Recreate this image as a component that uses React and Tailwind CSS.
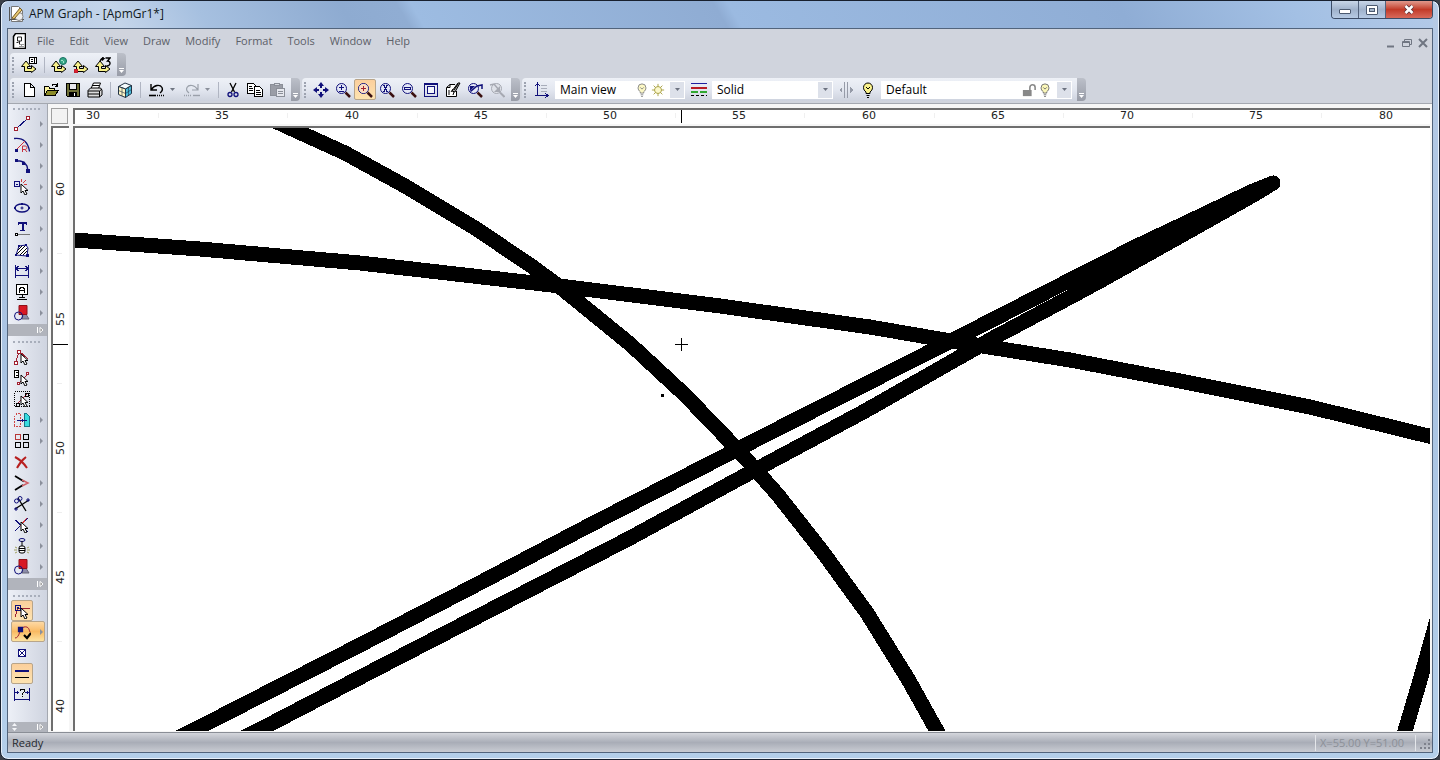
import React from 'react';

const NAVY = '#10107a';
const RED = '#a02030';

function Icon({ children, size = 16, className = '' }) {
  return (
    <svg
      width={size}
      height={size}
      viewBox="0 0 16 16"
      fill="none"
      stroke="#000"
      shapeRendering="crispEdges"
      className={`shrink-0 ${className}`}
      aria-hidden="true"
    >
      {children}
    </svg>
  );
}

/* pair of yellow arrows shared by the coordinate system icons */
const AXES = (
  <path d="M3.500 14.500V9.500H.5L5 4 9.500 9.500H6.500v2h4V8.500L15 12l-4.500 3.500V14.500z" fill="#f7f08a" shapeRendering="auto" />
);

const LENS = (
  <>
    <circle cx="6.500" cy="6.500" r="5" fill="#e4e8f6" stroke={NAVY} shapeRendering="auto" />
    <path d="M10.500 10.500L15 15" stroke="#3a1010" strokeWidth="2.500" shapeRendering="auto" />
  </>
);

const BULB = (
  <g shapeRendering="auto">
    <path d="M6 11.500V10C4.500 8.800 3.500 7.500 3.500 5.500a4.500 4.500 0 0 1 9 0c0 2-1 3.300-2.500 4.500v1.500z" fill="#faf28c" />
    <path d="M6.500 13.500h3M7 15.500h2M6 5l2 2 2-2" />
  </g>
);

const CURSOR = <path d="M7 5v9l2-2 2 4 2-1-2-3.500h3z" fill="#fff" strokeWidth="1" shapeRendering="auto" />;

const SHAPES = (
  <g shapeRendering="auto">
    <path d="M10 6l5 8H8z" fill="#8b8ba8" stroke="#667" />
    <path d="M5 .5h8v9H5z" fill="#d81824" stroke="#901018" />
    <circle cx="4.500" cy="11" r="4" stroke={NAVY} />
  </g>
);

const ICONS = {
  axesForm: <>{AXES}<path d="M8.500.5h7v6h-7z" fill="#fff" /><path d="M10 2.500h2M10 4.500h2M13.500 1v5" /></>,
  axesGlobe: <>{AXES}<circle cx="12" cy="4" r="3.500" fill="#38a888" stroke="#157060" shapeRendering="auto" /><path d="M10 3l2 1 1 2" stroke="#9fe0c8" /></>,
  axesOrigin: <>{AXES}<path d="M1 12.500h3v3H1z" fill="#e02030" stroke="#c02030" /></>,
  axesRotate: <>{AXES}<path d="M5 4c1-2 2-3 4-3M7 .5l2 1-2 2M10.500 1h4.500l-2.500 3c3.500 0 3.500 5-1 5" strokeWidth="1.400" shapeRendering="auto" /></>,
  fresh: <path d="M3.500 1.500h6l4 4v9h-10zM9.500 1.500v4h4" fill="#fff" />,
  open: <><path d="M1.500 13.500v-9h4l1 1.500h5v3" fill="#faf3a0" /><path d="M1.500 13.500l3-5h11l-3.500 5z" fill="#8b8b28" /><path d="M9 3.500c2-2 4-2 5 0M14.500 1v3h-3" /></>,
  save: <><path d="M1.500 1.500h13v13h-12l-1-1z" fill="#6e7038" /><path d="M4.500 1.500h7v6h-7z" fill="#e8e8ef" /><path d="M4.500 10h7v4.500h-7z" fill="#000" /><path d="M9.500 11v3" stroke="#fff" /></>,
  print: <g shapeRendering="auto"><path d="M4 6.500L6.500 1h7L11.500 6.500" fill="#fff" /><path d="M1 8.500L3.500 6h10l1.500 2v5l-2.500 2H1z" fill="#ddd" /><path d="M1 9h11.500l2.500-2M1 12h11M12.500 9v6M5 3.500h7" /></g>,
  cube: <g shapeRendering="auto" stroke="#234"><path d="M1.500 4.500L8 1l6.500 2.500L8.500 7z" fill="#f4fafc" /><path d="M1.500 4.500l7 2.500v8.500l-7-3z" fill="#fff6c4" /><path d="M8.500 7l6-3.500v8l-6 4z" fill="#48bad8" /><path d="M1.500 8.500l7 3 6-4M5 5.800v8M11.500 5.200v8" strokeWidth=".6" /></g>,
  undo: <g shapeRendering="auto"><path d="M2 2v6h6M2.500 7.500C5 3 11 2 13 5.500c1 2 0 4-2 5.500" strokeWidth="1.400" /><path d="M0 13.500h7" strokeWidth="1.600" /><path d="M8 13.500h8" strokeDasharray="1 1" strokeWidth="1.600" /></g>,
  redo: <g shapeRendering="auto" stroke="#9aa0aa"><path d="M14 2v6H8M13.500 7.500C11 3 5 2 3 5.500c-1 2 0 4 2 5.500" strokeWidth="1.200" /><path d="M9 13.500h7" strokeWidth="1.400" /><path d="M0 13.500h8" strokeDasharray="1 1" strokeWidth="1.400" /></g>,
  cut: <g shapeRendering="auto"><path d="M5 1l4.500 9M11 1L6.500 10" strokeWidth="1.300" /><circle cx="5" cy="12.500" r="2" stroke={NAVY} strokeWidth="1.300" /><circle cx="11" cy="12.500" r="2" stroke={NAVY} strokeWidth="1.300" /></g>,
  copy: <><path d="M.5 1.500h6l2 2v8h-8zM2 4.500h3M2 6.500h4M2 8.500h4" fill="#fff" /><path d="M7.500 4.500h5l3 3v7h-8zM9 8.500h4M9 10.500h5M9 12.500h5" fill="#fff" /></>,
  paste: <g stroke="#8b8f98"><path d="M1.500 2.500h12v11h-12z" fill="#9a9da6" /><path d="M5 1.500h5v2H5z" fill="#d5d8df" /><path d="M7.500 6.500h8v8h-8zM9 9.500h5M9 11.500h5" fill="#e6e8ee" /></g>,
  pan: <g fill={NAVY} stroke="none" shapeRendering="auto"><path d="M8 0l3 4H9v2H7V4H5zM8 16l3-4H9v-2H7v2H5zM0 8l4-3v2h2v2H4v2zM16 8l-4-3v2h-2v2h2v2z" /></g>,
  zoomBoth: <>{LENS}<path d="M4 5.500h5M6.500 3v5M4 9.500h5" stroke={NAVY} /></>,
  zoomIn: <>{LENS}<circle cx="6.500" cy="6.500" r="4.500" fill="#fbdcc0" stroke="none" shapeRendering="auto" /><path d="M4 6.500h5M6.500 4v5" stroke={RED} /></>,
  zoomX: <>{LENS}<path d="M4.500 3l4 7M8.500 3l-4 7M4 3.500h2M7 3.500h2M4 9.500h2M7 9.500h2" stroke={NAVY} /></>,
  zoomOut: <>{LENS}<path d="M3.500 5.500h6v2h-6z" stroke={NAVY} /></>,
  fit: <><path d="M1.500 1.500h13v13h-13z" stroke={NAVY} strokeWidth="1" /><path d="M4.500 4.500h7v7h-7z" fill="#f3f5fb" stroke={NAVY} /><path d="M1 2h14" stroke={NAVY} /></>,
  redraw: <g shapeRendering="auto"><path d="M10 2.500H5l-3.500 3v9h10V9" fill="#fff" /><path d="M5 2.500v3H2M4 8v5M6 10l2-3M8 13l1-3" /><path d="M7 9L13 1h2l-5 9z" fill="#aaa" /><path d="M9 8l4-6" /></g>,
  zoomPrev: <>{LENS}<path d="M3.500 9.500L10 4l5-1v4" stroke={NAVY} strokeWidth="1.500" shapeRendering="auto" /><path d="M3 4h5l-5 5z" fill={NAVY} stroke="none" shapeRendering="auto" /></>,
  zoomNext: <g stroke="#a6a9b2" shapeRendering="auto"><circle cx="7.500" cy="6.500" r="5" fill="#dfe2e9" /><path d="M11 10.500L15.500 15" strokeWidth="2" /><path d="M1 3l4-1 5 6" strokeWidth="1.500" /><path d="M11 4v6H5z" fill="#a6a9b2" stroke="none" /></g>,
  ucs: <><path d="M4.500 1v12M2 13.500h13M2.500 4l2-3 2 3M12 11l3 2.500-3 2.500" stroke={NAVY} /><path d="M8 3.500h6M8 6.500h6M8 9.500h6" stroke="#a8adba" /></>,
  bulb: BULB,
  sun: <g stroke="#a29a38" shapeRendering="auto"><circle cx="8" cy="8" r="4" fill="#fbf8cc" /><path d="M8 1v3M8 12v3M1 8h3M12 8h3M3 3l2 2M11 11l2 2M13 3l-2 2M5 11l-2 2" /></g>,
  linetypes: <><path d="M0 1.500h16" stroke="#2020a0" /><path d="M0 6h16" stroke="#b81c24" strokeWidth="2" /><path d="M0 10h16" stroke="#30a830" strokeWidth="2" strokeDasharray="7 2" /><path d="M0 13.500h16" strokeDasharray="3 2" /></>,
  split: <g stroke="#969ba8"><path d="M6.500 0v16M9.500 0v16" /><path d="M1 8l3-3v6zM15 8l-3-3v6z" fill="#969ba8" stroke="none" /></g>,
  lock: <g shapeRendering="auto"><path d="M9 8V5a3 3 0 0 1 6 0v3" stroke="#888" strokeWidth="1.800" /><path d="M1 8h10v7H1z" fill="#888" stroke="none" /></g>,
  line: <><path d="M2 13L14 2" stroke={NAVY} /><path d="M.5 11.500h3v3h-3zM12.500.5h3v3h-3z" fill="#fff" stroke={RED} /></>,
  arc: <g shapeRendering="auto"><path d="M0 1.500c8-1 14 3 15.500 13" stroke={NAVY} strokeWidth="1.300" /><path d="M2 13L11 4" stroke="#d03040" /><path d="M1 12h3v3H1z" fill={NAVY} stroke="none" /><path d="M8.500 15V9H11c2.500 0 2.500 3.500 0 3.500H8.500M11 12.500l2 2.500" stroke="#c83040" /></g>,
  spline: <g shapeRendering="auto"><path d="M2 3h4l4 1 3 4 1 5" stroke={NAVY} strokeWidth="1.400" /><path d="M1 1h3v3H1zM8 4h3v3H8zM12 11h4v4h-4z" fill={NAVY} stroke="none" /></g>,
  point: <><path d="M.5 2.500h5v5h-5zM2 5h2" fill="#dfe3f5" stroke={NAVY} /><path d="M7 0v3M9 4l3-3M10 5h3" stroke="#d04040" />{CURSOR}</>,
  ellipse: <g shapeRendering="auto"><ellipse cx="8" cy="8" rx="7" ry="4" stroke={NAVY} strokeWidth="1.300" /><path d="M6.500 8h3M8 6.500v3" stroke={NAVY} /><path d="M0 7h2v2H0zM14 7h2v2h-2zM7 3h2v2H7z" fill={NAVY} stroke="none" /></g>,
  text: <><path d="M4 1.500h9M8.500 1v8" stroke={NAVY} strokeWidth="2" /><path d="M4.500 1v3M12.500 1v3M6 9.500h5" stroke={NAVY} /><path d="M3 13.500h13" stroke="#777" /><path d="M1.500 12.500h2v2h-2z" fill="#fff" /></>,
  hatch: <g shapeRendering="auto"><path d="M2 13L5 4l7-1 2 3-1 8z" fill="#fff" stroke={NAVY} /><path d="M3 12l8-8M6 13l7-7M9 13l4-4M4 8l4-4" /><path d="M1 12h2v2H1zM12 12h3v3h-3zM11 2h2v2h-2zM4 3h2v2H4z" fill={NAVY} stroke="none" /></g>,
  dimension: <path d="M1.500 2v13M14.500 2v13M1 12.500h14M2 5.500h12M5 3L2 5.500 5 8M11 3l3 2.500L11 8" stroke={NAVY} strokeWidth="1.300" />,
  annotation: <><path d="M2.500.5h11v10h-11zM8 10.500V14M3 15h10M5 13h6" fill="#fff" /><path d="M5.500 9V5l2-2h1l2 2v4M5.500 6.500h5" /></>,
  shapes: SHAPES,
  editNode: <><path d="M2 13L5 2l9 8" stroke={RED} /><path d="M.5 12.500h3v3h-3zM3.500 1.500h3v3h-3z" fill="#fff" stroke={RED} />{CURSOR}</>,
  editList: <><path d="M.5.5h4v7h-4zM2 2.500h2M2 5h2" fill="#fff" /><path d="M5 13l8-8" stroke={RED} /><path d="M12.500 2.500h2v2h-2zM3.500 12.500h2v2h-2z" fill="#fff" stroke={RED} />{CURSOR}</>,
  selectBox: <><path d="M.5.5h15v15H.5z" strokeDasharray="1 1" /><path d="M3 13L13 3" stroke={RED} /><path d="M2 12h3v3H2zM11 2h3v3h-3z" />{CURSOR}</>,
  mirror: <><path d="M6.500 1.500C3 1 1 2 .5 6v8h6z" stroke="#d04848" strokeDasharray="2 1" /><path d="M10.500 1.500h2l3 3v10h-5z" fill="#38dce0" stroke="#187888" /><path d="M3 8.500h10M8 7v3" stroke={NAVY} /></>,
  array: <><path d="M1.500 1.500h5v5h-5z" stroke="#b83838" /><path d="M9.500 1.500h5v5h-5zM1.500 9.500h5v5h-5zM9.500 9.500h5v5h-5z" /></>,
  erase: <path d="M1 3c4 2 8 5 12 11M12 3C8 6 5 10 3 14" stroke="#b82020" strokeWidth="2" shapeRendering="auto" />,
  corner: <g shapeRendering="auto"><path d="M1 1l9 5.500M1 15l8-5" strokeWidth="1.800" /><path d="M8 5l6 3-6 3" stroke="#d06068" strokeWidth="1.500" /></g>,
  trim: <g shapeRendering="auto"><path d="M1 13L15 4M4 2l8 13" strokeWidth="1.300" /><circle cx="2.500" cy="5" r="2" stroke={NAVY} /><circle cx="6" cy="2.500" r="2" stroke={NAVY} /><path d="M1 12h2v2H1zM13 3h2v2h-2z" stroke={NAVY} /></g>,
  breakLine: <><path d="M1 3l13 12M1 14L14 1" stroke={NAVY} strokeWidth="1.300" /><path d="M6 9l7-8" stroke="#d03838" />{CURSOR}</>,
  explode: <g shapeRendering="auto"><ellipse cx="8" cy="2" rx="3" ry="1.500" stroke={NAVY} /><path d="M8 3v5" /><rect x="5" y="8" width="6" height="7" rx="2" fill="#fff" /><path d="M5 10.500h6M5 12.500h6" /><path d="M1 9l2 1M0 12h3M1 15l2-1M15 9l-2 1M16 12h-3M15 15l-2-1" stroke="#a0a060" /></g>,
  snapEnd: <><path d="M4 5h12M4 5L1 14" stroke={RED} /><path d="M1.500 2.500h5v5h-5zM3 5h2" stroke={NAVY} strokeWidth="1.500" />{CURSOR}</>,
  snapCurve: <g shapeRendering="auto"><path d="M0 14c5 0 4-10 9-11s5 3 6 5" stroke={RED} /><path d="M3.500 3.500h4v4h-4zM3.500 3.500l4 4M7.500 3.500l-4 4" stroke={NAVY} strokeWidth="1.300" /><path d="M9 11l3 3 4-5" strokeWidth="2.200" /></g>,
  snapPoint: <path d="M4.500 4.500h7v7h-7zM5 5l6 6M11 5l-6 6" fill="#fff" stroke={NAVY} />,
  parallel: <><path d="M1 5h14" stroke={NAVY} strokeWidth="2" /><path d="M1 11.500h14" /></>,
  dimQuery: <><path d="M.5 1v13M15.500 1v13M0 12.500h16M1 5.500h4M11 5.500h4M3 4v3M13 4v3" stroke={NAVY} /><path d="M6 4V2h4v3L8 7v1M8 9v1" /></>,
};

const MENU = ['File', 'Edit', 'View', 'Draw', 'Modify', 'Format', 'Tools', 'Window', 'Help'];

const DRAW_TOOLS = ['line', 'arc', 'spline', 'point', 'ellipse', 'text', 'hatch', 'dimension', 'annotation', 'shapes'];
const EDIT_TOOLS = ['editNode', 'editList', 'selectBox', 'mirror', 'array', 'erase', 'corner', 'trim', 'breakLine', 'explode', 'shapes'];
const NO_FLYOUT = ['editNode', 'editList', 'selectBox', 'erase', 'snapEnd', 'snapPoint', 'parallel', 'dimQuery'];
const SNAP_TOOLS = ['snapEnd', 'snapCurve', 'snapPoint', 'parallel', 'dimQuery'];
const SNAP_ACTIVE = ['snapEnd', 'snapCurve', 'parallel'];

const H_MARKS = [
  [30, 93], [35, 222], [40, 352], [45, 481], [50, 610], [55, 739],
  [60, 869], [65, 998], [70, 1127], [75, 1256], [80, 1386],
];
const V_MARKS = [[60, 188], [55, 318], [50, 447], [45, 576], [40, 705]];

function ToolButton({ name, active }) {
  return (
    <button
      type="button"
      aria-label={name}
      className={`flex h-[21px] w-[22px] shrink-0 items-center justify-center ${active ? 'rounded-xs border border-[#b8a58a] bg-linear-to-b from-[#fbcf9c] to-[#fde3b0]' : ''}`}
    >
      <Icon>{ICONS[name]}</Icon>
    </button>
  );
}

function Separator() {
  return (
    <span className="flex w-2 shrink-0 justify-center">
      <span className="h-4 w-px bg-[#b0b5c2]" />
    </span>
  );
}

function DropArrow({ className = '' }) {
  return (
    <svg width="5" height="3" viewBox="0 0 5 3" className={className} aria-hidden="true">
      <path d="M0 0h5L2.500 3z" fill="currentColor" />
    </svg>
  );
}

function Toolbar({ label, children }) {
  return (
    <div role="toolbar" aria-label={label} className="flex h-[23px]">
      <div className="flex items-center rounded-l-sm bg-linear-to-b from-[#eef1f7] via-[#e3e7f0] to-[#cdd2de] pr-[3px]">
        <span className="ml-[2px] mr-1 h-4 w-[2px] border-l-2 border-dotted border-[#9da3b0]" />
        {children}
      </div>
      <button
        type="button"
        aria-label="Toolbar options"
        className="flex w-[9px] flex-col items-center justify-end gap-px rounded-r-sm bg-linear-to-b from-[#bcc0c9] to-[#989ca7] pb-[3px] text-white"
      >
        <span className="h-px w-[5px] bg-white" />
        <DropArrow />
      </button>
    </div>
  );
}

function Split({ name, muted }) {
  return (
    <span className="flex items-center">
      <button type="button" aria-label={name} className="flex w-[26px] justify-center">
        <Icon>{ICONS[name]}</Icon>
      </button>
      <button type="button" aria-label={`${name} list`} className={`flex h-4 w-[9px] items-center ${muted ? 'text-[#8a8f9a]' : 'text-[#707682]'}`}>
        <DropArrow />
      </button>
    </span>
  );
}

function Combo({ label, value, className, children }) {
  return (
    <div className={`flex h-[18px] items-center bg-white pl-[5px] pr-px ${className}`}>
      <select aria-label={label} className="min-w-0 flex-1 appearance-none bg-transparent text-[12px] leading-4 text-black">
        <option>{value}</option>
      </select>
      {children}
      <span className="ml-1 flex h-4 w-[14px] shrink-0 items-center justify-center bg-[#dde1ea] text-[#6c7280]">
        <DropArrow />
      </span>
    </div>
  );
}

function SideGroup({ label, tools, active = [], grow }) {
  return (
    <div role="toolbar" aria-label={label} className={`flex flex-col ${grow ? 'flex-1' : ''}`}>
      <div className="flex h-[9px] items-center pl-[5px]">
        <span className="w-[27px] border-t-2 border-dotted border-[#a8aebb]" />
      </div>
      {tools.map((name) => {
        const on = active.includes(name);
        const flyout = !NO_FLYOUT.includes(name);
        return (
          <div
            key={name}
            className={`ml-[3px] flex h-[21px] w-[34px] items-center ${on && flyout ? 'rounded-xs border border-[#b8a58a] bg-linear-to-b from-[#fdd9a4] via-[#f9ba62] to-[#fde3a0]' : ''}`}
          >
            <ToolButton name={name} active={on && !flyout} />
            {flyout && (
              <button type="button" aria-label={`${name} variants`} className="flex flex-1 justify-center pl-1">
                <svg width="3" height="6" viewBox="0 0 3 6" aria-hidden="true">
                  <path d="M0 0l3 3-3 3z" fill="#8b909c" />
                </svg>
              </button>
            )}
          </div>
        );
      })}
      {grow && <div className="flex-1" />}
      <button
        type="button"
        aria-label={`${label} options`}
        className={`flex shrink-0 items-center justify-end bg-[#b1b4bc] pr-[3px] ${grow ? 'h-[10px]' : 'my-px h-3'}`}
      >
        {grow && (
          <svg width="5" height="8" viewBox="0 0 5 8" className="mr-5" aria-hidden="true">
            <path d="M0 3l2.500-3L5 3zM0 5h5L2.500 8z" fill="#f4f5f8" />
          </svg>
        )}
        <svg width="7" height="8" viewBox="0 0 7 8" aria-hidden="true">
          <path d="M.5 1v6" stroke="#fff" />
          <path d="M3 1.500l3 2.500-3 2.500z" fill="#888" stroke="#fff" />
        </svg>
      </button>
    </div>
  );
}

function TitleBar() {
  return (
    <header className="flex h-[27px] items-start bg-[linear-gradient(60deg,#b6cae5_0%,#c4d5ea_8%,#a6c0e0_14%,#8eabd1_24%,#90add3_28%,#9dbce2_29%,#8facd3_50%,#9bbae1_51%,#8fadd5_78%,#a3c0e4_90%,#b3cae8_100%)] pl-[2px]">
      <svg width="16" height="16" viewBox="0 0 16 16" className="mt-[5px]" aria-hidden="true">
        <path d="M2.500.5h7l4 4v11h-11z" fill="#fff" stroke="#777" />
        <path d="M.5 1v14M0 13.500h15" stroke="#555" />
        <circle cx="10" cy="10.500" r="4" fill="#eee" stroke="#888" />
        <path d="M3 12L11 2l2 2-8 9z" fill="#e8c870" stroke="#775c28" />
      </svg>
      <h1 className="ml-1 mt-[5px] flex-1 text-[12px] font-normal leading-4 text-[#101820]">APM Graph - [ApmGr1*]</h1>
      <div className="flex h-[18px] overflow-hidden rounded-b-sm border border-t-0 border-[#3c4c66]">
        <button type="button" aria-label="Minimize" className="flex w-[27px] items-center justify-center border-r border-[#52627c] bg-linear-to-b from-[#c8d6e8] via-[#a0b2cb] to-[#b6cae4]">
          <span className="mt-1 h-[5px] w-3 rounded-[1px] border border-[#4c5a70] bg-white" />
        </button>
        <button type="button" aria-label="Maximize" className="flex w-[27px] items-center justify-center border-r border-[#52627c] bg-linear-to-b from-[#c8d6e8] via-[#a0b2cb] to-[#b6cae4]">
          <span className="flex h-[10px] w-3 items-center justify-center rounded-[1px] border border-[#4c5a70] bg-white">
            <span className="h-1 w-[6px] border border-[#4c5a70] bg-[#a8b8cc]" />
          </span>
        </button>
        <button type="button" aria-label="Close" className="flex w-[46px] items-center justify-center bg-linear-to-b from-[#e0988c] via-[#c23a28] to-[#d8695a]">
          <svg width="12" height="11" viewBox="0 0 12 11" aria-hidden="true">
            <path d="M2.500 2l7 7M9.500 2l-7 7" stroke="#5a3038" strokeWidth="4" />
            <path d="M2.500 2l7 7M9.500 2l-7 7" stroke="#fff" strokeWidth="2.500" />
          </svg>
        </button>
      </div>
    </header>
  );
}

function MenuBar() {
  return (
    <nav className="flex h-6 items-center pl-1 pr-1">
      <svg width="14" height="16" viewBox="0 0 14 16" fill="none" aria-hidden="true">
        <path d="M3.500.5h10v15h-12v-12z" fill="#fff" stroke="#000" strokeWidth="1.500" />
        <path d="M5.500 4h4v4h-4zM7.500 8v3M4.500 9.500h2" stroke="#222" />
        <path d="M7 11.500h5M7 13.500h5M9.500 11v3" stroke="#999" />
      </svg>
      <ul className="ml-[11px] flex flex-1 gap-[15px] text-[11px] leading-4 text-[#5c6068]">
        {MENU.map((item) => (
          <li key={item}>
            <button type="button" className="block">{item}</button>
          </li>
        ))}
      </ul>
      <div className="flex gap-[6px] pt-1 text-[#707682]">
        {['M1 8.500h7', 'M.5 3.500h7v5h-7zM.5 4.500h7M2.500 3V1.500h7v5H8', 'M1 1l8 8M9 1L1 9'].map((d, i) => (
          <button key={d} type="button" aria-label={['Minimize document', 'Restore document', 'Close document'][i]}>
            <svg width="10" height="10" viewBox="0 0 10 10" fill="none" stroke="currentColor" strokeWidth={i === 1 ? 1 : 2} aria-hidden="true">
              <path d={d} />
            </svg>
          </button>
        ))}
      </div>
    </nav>
  );
}

function Drawing() {
  return (
    <svg
      className="block h-full w-full"
      viewBox="75 128 1355 603"
      preserveAspectRatio="xMinYMin slice"
      fill="none"
      stroke="#000"
      strokeLinejoin="round"
      shapeRendering="crispEdges"
      role="img"
      aria-label="Drawing"
    >
      <g strokeWidth="15" strokeLinecap="round">
        <polyline points="262,115 290,128 345,153 405,186 475,228 530,265 560,287 630,344 685,395 738,450 778,495 822,551 867,613 908,679 937,731 945,748" />
        <polyline points="60,239 200,249 360,263 560,286 720,306 870,327 945,340 1070,360 1180,381 1310,407 1445,440" />
        <polyline points="160,747 192,731 360,645 470,588 590,525 738,449 860,387 953,340 1076,277 1137,246 1190,221 1253,191 1273,183" />
        <polyline points="225,747 257,731 380,667 500,605 630,538 755,470 865,411 997,336 1076,294 1100,281 1200,225 1255,194 1273,183" />
        <polyline points="1400,748 1405,731 1421,677 1437,620" />
      </g>
      <path d="M675 344.500h13M681.500 338v13" />
      <path d="M661 394h3v3h-3z" fill="#000" stroke="none" />
    </svg>
  );
}

function Workspace() {
  return (
    <main className="grid min-w-0 flex-1 grid-cols-[18px_1fr] grid-rows-[16px_1fr] gap-x-1 gap-y-[2px] border-l border-[#a4a8b0] bg-[#f6f6f6] pb-px pl-[3px] pr-[2px] pt-1">
      <div className="mr-px border border-[#a0a0a0] bg-[#f2f2f2]" />

      <div className="overflow-hidden border-l-2 border-t-2 border-[#6e6e6e] bg-white">
        <svg width="100%" height="14" className="block" fontFamily="'DejaVu Sans', sans-serif" fontSize="11" fill="#222" aria-label="Horizontal ruler">
          {H_MARKS.map(([n, x]) => (
            <g key={n}>
              <text x={x - 75} y="9" textAnchor="middle">{n}</text>
              <path d={`M${x - 10}.5 3v5`} stroke="#f0f0f0" />
            </g>
          ))}
          <path d="M606.500 0v13" stroke="#000" />
        </svg>
      </div>

      <div className="overflow-hidden border-l-2 border-t-2 border-[#6e6e6e] bg-white">
        <svg width="16" height="100%" className="block" fontFamily="'DejaVu Sans', sans-serif" fontSize="11" fill="#222" aria-label="Vertical ruler">
          {V_MARKS.map(([n, y]) => (
            <g key={n}>
              <text transform={`translate(11 ${y - 127}) rotate(-90)`} textAnchor="middle">{n}</text>
              <path d={`M4 ${y - 63}.5h5`} stroke="#eee" />
            </g>
          ))}
          <path d="M0 216.500h15" stroke="#000" />
        </svg>
      </div>

      <div className="min-h-0 overflow-hidden border-l-2 border-t-2 border-[#6e6e6e] bg-white">
        <Drawing />
      </div>
    </main>
  );
}

export default function App() {
  return (
    <div className="h-screen min-h-[620px] w-full overflow-hidden bg-[#3c4048] font-['Open_Sans',sans-serif]">
      <div className="flex h-full flex-col rounded-lg border border-[#18202e] bg-linear-to-b from-[#b6cae5] via-[#a9c3e2] to-[#b4cfea] px-[6px] pb-[6px] shadow-[inset_0_0_0_1px_#e8f0fa]">
        <TitleBar />
        <div className="flex min-h-0 flex-1 flex-col border border-[#52647c] bg-[#d0d4dd]">
          <MenuBar />

          <div className="flex h-[25px] pl-[2px]">
            <Toolbar label="Coordinate systems">
              <ToolButton name="axesForm" />
              <Separator />
              <ToolButton name="axesGlobe" />
              <ToolButton name="axesOrigin" />
              <ToolButton name="axesRotate" />
            </Toolbar>
          </div>

          <div className="flex h-[26px] gap-[2px] border-b border-[#a4a8b0] pl-[2px]">
            <Toolbar label="Standard">
              <ToolButton name="fresh" />
              <ToolButton name="open" />
              <ToolButton name="save" />
              <ToolButton name="print" />
              <Separator />
              <ToolButton name="cube" />
              <Separator />
              <Split name="undo" />
              <Split name="redo" muted />
              <Separator />
              <ToolButton name="cut" />
              <ToolButton name="copy" />
              <ToolButton name="paste" />
            </Toolbar>
            <Toolbar label="Zoom">
              <ToolButton name="pan" />
              <ToolButton name="zoomBoth" />
              <ToolButton name="zoomIn" active />
              <ToolButton name="zoomX" />
              <ToolButton name="zoomOut" />
              <ToolButton name="fit" />
              <ToolButton name="redraw" />
              <ToolButton name="zoomPrev" />
              <ToolButton name="zoomNext" />
            </Toolbar>
            <Toolbar label="Layers and lines">
              <ToolButton name="ucs" />
              <Combo label="View" value="Main view" className="mx-[3px] w-[130px]">
                <Icon size={14} className="mr-[2px] opacity-50">{ICONS.bulb}</Icon>
                <Icon size={14} className="mr-px">{ICONS.sun}</Icon>
              </Combo>
              <ToolButton name="linetypes" />
              <Combo label="Line type" value="Solid" className="mx-[2px] w-[121px]" />
              <ToolButton name="split" />
              <ToolButton name="bulb" />
              <Combo label="Layer" value="Default" className="mx-[2px] w-[191px]">
                <Icon size={14} className="mr-[2px]">{ICONS.lock}</Icon>
                <Icon size={14} className="mr-px opacity-60">{ICONS.bulb}</Icon>
              </Combo>
            </Toolbar>
          </div>

          <div className="flex min-h-0 flex-1">
            <aside className="flex w-[39px] shrink-0 flex-col bg-linear-to-r from-[#edf0f7] to-[#cfd4e0]">
              <SideGroup label="Draw" tools={DRAW_TOOLS} />
              <SideGroup label="Edit" tools={EDIT_TOOLS} />
              <SideGroup label="Snap" tools={SNAP_TOOLS} active={SNAP_ACTIVE} grow />
            </aside>
            <Workspace />
          </div>

          <footer className="flex h-5 shrink-0 items-center border-t border-[#8a8e96] bg-linear-to-b from-[#d4d6dc] via-[#a9adb7] to-[#c9ccd3] pl-1 text-[11px] leading-4 text-[#26292e]">
            <span className="flex-1">Ready</span>
            <span className="flex h-4 w-[101px] items-center border-x border-[#e4e6ea] pl-1 text-[#8c9098]">X=55.00 Y=51.00</span>
            <svg width="16" height="16" viewBox="0 0 16 16" aria-hidden="true">
              <path d="M12 4h2v2h-2zM12 8h2v2h-2zM8 8h2v2H8zM12 12h2v2h-2zM8 12h2v2H8zM4 12h2v2H4z" fill="#7e828c" />
            </svg>
          </footer>
        </div>
      </div>
    </div>
  );
}
